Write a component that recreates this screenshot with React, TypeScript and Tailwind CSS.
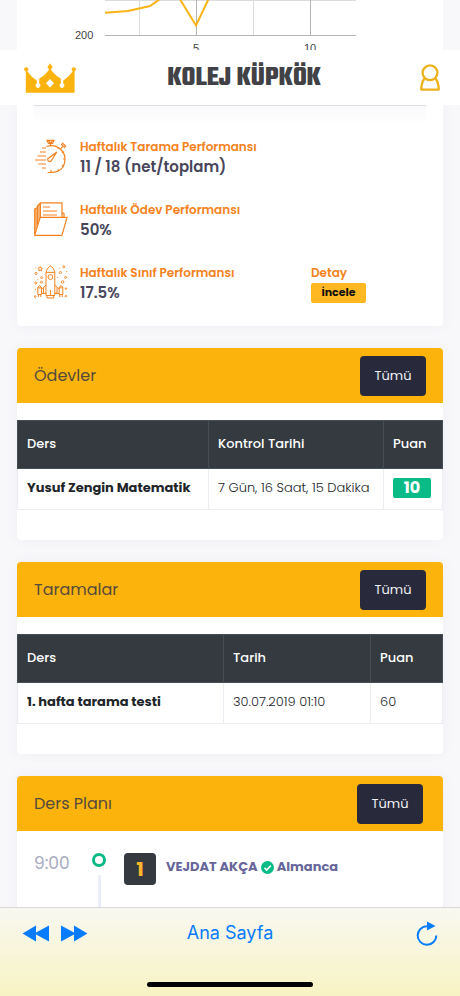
import type { ReactNode } from "react";
import clsx from "clsx";

interface Performance {
  label: string;
  value: string;
  icon: ReactNode;
  detail?: boolean;
}

function Crown() {
  return (
    <svg width="52" height="30" viewBox="0 0 52 30" fill="#fbb30f" aria-hidden="true">
      <circle cx="2.2" cy="6.3" r="2.1" />
      <circle cx="49.8" cy="6.3" r="2.1" />
      <path d="M26 0.3L28.6 4L27 6.6L28.4 8.6C31 12 34 14 36.8 15.6V20.6A2.3 2.3 0 1 0 39.2 20.6V17.4C43.5 15 46.5 11 48.8 8L50.6 8V29.7H1.8V8L3.2 8C5.5 11 8.5 15 12.8 17.4V20.6A2.3 2.3 0 1 0 15.2 20.6V15.6C18 14 21 12 23.6 8.6L25 6.6L23.4 4Z" />
      <path d="M26 16L30 20.2L26 24.4L22 20.2Z" fill="#fff" />
    </svg>
  );
}

function UserIcon() {
  return (
    <svg width="20" height="28" viewBox="0 0 20 28" fill="none" stroke="#edb11c" strokeWidth="2.3" aria-hidden="true">
      <circle cx="10" cy="8.8" r="7.4" />
      <path d="M4.8 14.4C2.4 16.6 1.4 20.5 1.3 25.6H18.7C18.6 20.5 17.6 16.6 15.2 14.4" strokeLinejoin="round" />
    </svg>
  );
}

function StopwatchIcon() {
  return (
    <svg width="34" height="36" viewBox="0 0 34 36" fill="none" stroke="#f58220" strokeWidth="1.2" aria-hidden="true">
      <path d="M12.5 7.5Q17.5 5.6 22 7.4Q31 11.5 31 20Q30.6 33 17 33.5H13.6" />
      <path d="M13 1.3H20L18.6 4.4H14.4ZM16.5 4.4V7M14.4 1.3L16.5 4.4L18.6 1.3" />
      <path d="M26.8 9.6L29 7.2M27.6 5.6L30.6 8.4L31.6 7L28.8 4.4Z" />
      <path d="M22.8 13L17.6 21.2A2 2 0 1 1 15.4 18.6Z" />
      <path d="M8 9H12M6 13H12M3.5 17H12M1 21H12M4.5 25H12M8 29H12" />
      <path d="M17 31V33M23.8 30.4L24.8 32M28 26.2L29.6 27.2M29 20H31M28 13.8L29.6 12.8M23.8 9.6L24.6 8.2" />
    </svg>
  );
}

function FolderIcon() {
  return (
    <svg width="34" height="35" viewBox="0 0 34 35" fill="none" stroke="#f58220" strokeWidth="1.2" strokeLinejoin="round" aria-hidden="true">
      <path d="M28 15V0.8H6.4V15.4M6.4 1L3.4 4V23M3.4 5.5L0.7 7V33.4L6.2 15.4H33L28 33.4H0.7" />
      <path d="M5 2.6V19M2 6.4V28M28 10.5L30 11.6V15.2" />
      <path d="M9 5H16M9 9H23M9 13H23" />
    </svg>
  );
}

function RocketIcon() {
  return (
    <svg width="34" height="35" viewBox="0 0 34 35" fill="none" stroke="#f58220" strokeWidth="1" aria-hidden="true">
      <path d="M12 30.5V7.4Q12.6 3 16.4 0.8Q20.2 3 20.8 7.4V30.5ZM12 7.4H20.8M13 30.5V33H19.8V30.5M16.4 25V30" />
      <circle cx="16.4" cy="12" r="2.4" />
      <path d="M3.8 29.5V22.4L5.6 20.4L7.4 22.4V29.5ZM25.2 29.5V22.4L27 20.4L28.8 22.4V29.5ZM3.8 22.8H7.4M25.2 22.8H28.8" />
      <path d="M12 20L7.4 24.4M7.4 28.4H12M20.8 20L25.2 24.4M20.8 28.4H25.2M9.6 22.4V28.4M23 22.4V28.4M4.4 29.5V32M6.8 29.5V32M25.8 29.5V32M28.2 29.5V32" />
      <path d="M6.2 1.6L7 3L8.4 3.2L7.4 4.2L7.6 5.8L6.2 5L4.8 5.8L5 4.2L4 3.2L5.4 3Z" />
      <g strokeWidth="0.9">
        <circle cx="29.8" cy="1.8" r="1" />
        <circle cx="2" cy="8.4" r="1.1" />
        <circle cx="26.4" cy="7.6" r="1.1" />
        <circle cx="31.6" cy="12.4" r="1" />
        <circle cx="7.6" cy="12.6" r="1" />
        <circle cx="1.8" cy="18" r="1" />
        <circle cx="7.4" cy="17.2" r="1" />
        <circle cx="28.6" cy="17" r="1.3" />
        <circle cx="32" cy="23.6" r="0.8" />
        <circle cx="1.2" cy="31.6" r="0.9" />
        <circle cx="31.8" cy="31.2" r="0.8" />
      </g>
      <path d="M1 3H1.8M25.4 3.2H26.2M23.4 12.6H24.2M3.4 14.6H4.2M32 6.6H32.8M1 24.6H1.8" />
    </svg>
  );
}

const PERFORMANCES: Performance[] = [
  { label: "Haftalık Tarama Performansı", value: "11 / 18 (net/toplam)", icon: <StopwatchIcon /> },
  { label: "Haftalık Ödev Performansı", value: "50%", icon: <FolderIcon /> },
  { label: "Haftalık Sınıf Performansı", value: "17.5%", icon: <RocketIcon />, detail: true },
];

function ScoreChart() {
  return (
    <svg className="block w-full" viewBox="0 0 426 50" role="img" aria-label="Puan grafiği">
      <path d="M88 0.5H339M122.5 0V35M236.5 0V35" stroke="#dcdcdc" />
      <path d="M88 35.5H339M179.5 0V35M293.5 0V35" stroke="#b4b4b4" />
      <path d="M88 12.8L111 11L133 6L143 -1M161 -4L179 25.5L193 -4" fill="none" stroke="#fbb315" strokeWidth="2" />
      <g fontFamily="Liberation Sans, sans-serif" fontSize="11" fill="#444">
        <text x="58" y="39">200</text>
        <text x="176" y="52">5</text>
        <text x="287" y="52">10</text>
      </g>
    </svg>
  );
}

function PanelHeader({ title, className }: { title: string; className?: string }) {
  return (
    <header className={clsx("flex h-[55px] items-center justify-between rounded-t bg-[#fcb40c] pl-[17px]", className)}>
      <h2 className="text-base text-[#544a3c]">{title}</h2>
      <button type="button" className="h-10 w-[66px] rounded bg-[#282a3c] text-[13px] text-[#f1f1f5]">
        Tümü
      </button>
    </header>
  );
}

const TH = "border border-[#454d55] px-[9px] pb-[2px] text-left font-medium text-white";
const TD = "border border-[#ebedf2] px-[9px] pb-[2px] whitespace-nowrap";

export default function App() {
  return (
    <div className="flex h-screen flex-col overflow-hidden bg-[#f8f8fb] font-['Poppins','Inter',sans-serif] text-[#212529]">
      <div className="h-[50px] shrink-0 overflow-hidden px-[17px]">
        <div className="bg-white">
          <ScoreChart />
        </div>
      </div>

      <header className="flex h-[55px] shrink-0 items-center justify-between bg-white pr-5 pl-6">
        <a href="#" aria-label="Anasayfa">
          <Crown />
        </a>
        <h1 className="pt-1 pr-2 font-['Teko','Roboto',sans-serif] text-[27px] font-bold text-[#414146]">
          KOLEJ KÜPKÖK
        </h1>
        <button type="button" aria-label="Profil">
          <UserIcon />
        </button>
      </header>

      <main className="flex min-h-0 flex-1 flex-col gap-[22px] overflow-hidden px-[17px]">
        <section className="shrink-0 rounded-b bg-white px-[17px] pb-3 shadow-[0_0_13px_rgba(82,63,105,0.05)]">
          <div className="h-5 border-t border-[#dcdce2] bg-gradient-to-b from-[#fafafc] to-white" />
          {PERFORMANCES.map((p) => (
            <div key={p.label} className="flex h-[63px] items-center gap-3">
              <div className="w-[34px] shrink-0">{p.icon}</div>
              <div className="w-[219px] shrink-0 whitespace-nowrap">
                <h3 className="text-xs leading-5 font-semibold text-[#f58220]">{p.label}</h3>
                <p className="text-[15px] leading-5 font-semibold text-[#48465b]">{p.value}</p>
              </div>
              {p.detail && (
                <div>
                  <h3 className="text-xs leading-5 font-semibold text-[#f58220]">Detay</h3>
                  <button
                    type="button"
                    className="block h-5 w-[55px] rounded-xs bg-[#ffb822] text-[11px] font-bold text-[#111]"
                  >
                    İncele
                  </button>
                </div>
              )}
            </div>
          ))}
        </section>

        <section className="shrink-0 rounded bg-white pb-[30px] shadow-[0_0_13px_rgba(82,63,105,0.05)]">
          <PanelHeader title="Ödevler" className="pr-[17px]" />
          <table className="mt-[17px] w-full table-fixed border-collapse text-[13px]">
            <thead className="bg-[#343a40]">
              <tr className="h-12">
                <th className={TH}>Ders</th>
                <th className={`w-[175px] ${TH}`}>Kontrol Tarihi</th>
                <th className={`w-[59px] ${TH}`}>Puan</th>
              </tr>
            </thead>
            <tbody>
              <tr className="h-[41px]">
                <td className={`font-bold ${TD}`}>Yusuf Zengin Matematik</td>
                <td className={`font-light ${TD}`}>7 Gün, 16 Saat, 15 Dakika</td>
                <td className={TD}>
                  <span className="flex h-5 w-[38px] items-center justify-center rounded-xs bg-[#0abb87] text-base font-bold text-white">
                    10
                  </span>
                </td>
              </tr>
            </tbody>
          </table>
        </section>

        <section className="shrink-0 rounded bg-white pb-[30px] shadow-[0_0_13px_rgba(82,63,105,0.05)]">
          <PanelHeader title="Taramalar" className="pr-[17px]" />
          <table className="mt-[17px] w-full table-fixed border-collapse text-[13px]">
            <thead className="bg-[#343a40]">
              <tr className="h-12">
                <th className={TH}>Ders</th>
                <th className={`w-[147px] ${TH}`}>Tarih</th>
                <th className={`w-[72px] ${TH}`}>Puan</th>
              </tr>
            </thead>
            <tbody>
              <tr className="h-[41px]">
                <td className={`font-bold ${TD}`}>1. hafta tarama testi</td>
                <td className={`font-light ${TD}`}>30.07.2019 01:10</td>
                <td className={`font-light ${TD}`}>60</td>
              </tr>
            </tbody>
          </table>
        </section>

        <section className="shrink-0 rounded bg-white shadow-[0_0_13px_rgba(82,63,105,0.05)]">
          <PanelHeader title="Ders Planı" className="pr-5" />
          <div className="flex h-[120px] items-start px-[17px] pt-[22px]">
            <time className="w-[58px] text-[17px] leading-5 text-[#a7abc3]">9:00</time>
            <div className="flex w-[14px] flex-col items-center gap-2">
              <span className="size-[14px] rounded-full border-3 border-[#0abb87]" />
              <span className="h-16 w-[3px] bg-[#ebedf8]" />
            </div>
            <span className="ml-[18px] flex size-8 items-center justify-center rounded bg-[#343a40] text-xl font-bold text-[#fdb62b]">
              1
            </span>
            <p className="ml-[10px] flex h-7 items-center gap-[3px] text-[13px] font-bold whitespace-nowrap text-[#67669a]">
              VEJDAT AKÇA
              <svg width="13" height="13" viewBox="0 0 13 13" aria-hidden="true">
                <circle cx="6.5" cy="6.5" r="6.5" fill="#0abb87" />
                <path d="M3.4 6.8L5.6 9L9.8 4.6" fill="none" stroke="#fff" strokeWidth="1.6" />
              </svg>
              Almanca
            </p>
          </div>
        </section>
      </main>

      <footer className="flex h-[89px] shrink-0 flex-col items-center justify-between border-t border-[#d9d9dc] bg-gradient-to-b from-[#f8f8f1] to-[#f8f3c3] pb-[9px] text-[#087cff]">
        <nav className="grid w-full grid-cols-3 items-center px-[22px] pt-[11px]">
          <div className="flex gap-[10px]">
            <button type="button" aria-label="Geri">
              <svg width="28" height="17" viewBox="0 0 28 17" fill="currentColor">
                <path d="M0.5 8.5L14 0.5V7.6L27 0.5V16.5L14 9.4V16.5Z" />
              </svg>
            </button>
            <button type="button" aria-label="İleri">
              <svg width="28" height="17" viewBox="0 0 28 17" fill="currentColor">
                <path d="M27.5 8.5L14 0.5V7.6L1 0.5V16.5L14 9.4V16.5Z" />
              </svg>
            </button>
          </div>
          <a href="#" className="text-center font-['Inter',sans-serif] text-lg whitespace-nowrap">
            Ana Sayfa
          </a>
          <button type="button" aria-label="Yenile" className="justify-self-end">
            <svg width="22" height="25" viewBox="0 0 22 25" fill="none" stroke="currentColor" strokeWidth="2">
              <path d="M11.5 5.2H11A9.3 9.3 0 1 0 20.3 14.4" />
              <path d="M11 0.5L19.5 4.9L11 9.6Z" fill="currentColor" stroke="none" />
            </svg>
          </button>
        </nav>
        <div className="h-[5px] w-[36%] rounded-full bg-black" />
      </footer>
    </div>
  );
}
